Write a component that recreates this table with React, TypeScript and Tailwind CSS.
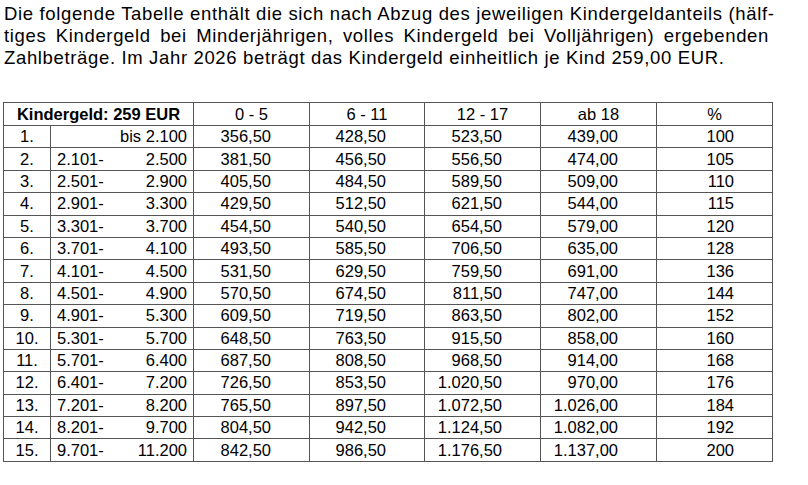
const ROWS: [string, string, string, string, string, string, string, string][] = [
    ["1.", "", "bis 2.100", "356,50", "428,50", "523,50", "439,00", "100"],
    ["2.", "2.101-", "2.500", "381,50", "456,50", "556,50", "474,00", "105"],
    ["3.", "2.501-", "2.900", "405,50", "484,50", "589,50", "509,00", "110"],
    ["4.", "2.901-", "3.300", "429,50", "512,50", "621,50", "544,00", "115"],
    ["5.", "3.301-", "3.700", "454,50", "540,50", "654,50", "579,00", "120"],
    ["6.", "3.701-", "4.100", "493,50", "585,50", "706,50", "635,00", "128"],
    ["7.", "4.101-", "4.500", "531,50", "629,50", "759,50", "691,00", "136"],
    ["8.", "4.501-", "4.900", "570,50", "674,50", "811,50", "747,00", "144"],
    ["9.", "4.901-", "5.300", "609,50", "719,50", "863,50", "802,00", "152"],
    ["10.", "5.301-", "5.700", "648,50", "763,50", "915,50", "858,00", "160"],
    ["11.", "5.701-", "6.400", "687,50", "808,50", "968,50", "914,00", "168"],
    ["12.", "6.401-", "7.200", "726,50", "853,50", "1.020,50", "970,00", "176"],
    ["13.", "7.201-", "8.200", "765,50", "897,50", "1.072,50", "1.026,00", "184"],
    ["14.", "8.201-", "9.700", "804,50", "942,50", "1.124,50", "1.082,00", "192"],
    ["15.", "9.701-", "11.200", "842,50", "986,50", "1.176,50", "1.137,00", "200"],
];

const HEADS = ["0 - 5", "6 - 11", "12 - 17", "ab 18", "%"];

const cell = "border border-[#555] p-0 align-middle";

export default function App() {
    return (
        <div className="min-h-[485px] w-[808px] bg-white text-black font-['Liberation_Sans',Arial,sans-serif]">
            {/* Intro paragraph, justified like the source document */}
            <div className="ml-[4px] w-[765px] pt-[3px] text-[18.5px] leading-[21.8px] tracking-[0.65px]">
                <div className="text-justify [text-align-last:justify] whitespace-nowrap">
                    Die folgende Tabelle enthält die sich nach Abzug des jeweiligen Kindergeldanteils (hälf-
                </div>
                <div className="text-justify [text-align-last:justify] whitespace-nowrap">
                    tiges Kindergeld bei Minderjährigen, volles Kindergeld bei Volljährigen) ergebenden
                </div>
                <div>Zahlbeträge. Im Jahr 2026 beträgt das Kindergeld einheitlich je Kind 259,00 EUR.</div>
            </div>

            <table className="mt-[34px] ml-[3px] w-[769px] table-fixed border-collapse text-[16.5px] leading-[19px]">
                <colgroup>
                    <col className="w-[47px]" />
                    <col className="w-[143px]" />
                    <col className="w-[116px]" />
                    <col className="w-[115px]" />
                    <col className="w-[116px]" />
                    <col className="w-[116px]" />
                    <col className="w-[116px]" />
                </colgroup>
                <thead>
                    <tr className="h-[22.6px]">
                        <th colSpan={2} className={`${cell} text-center font-bold`}>Kindergeld: 259 EUR</th>
                        {HEADS.map(h => (
                            <th key={h} className={`${cell} text-center font-normal`}>{h}</th>
                        ))}
                    </tr>
                </thead>
                <tbody>
                    {ROWS.map(r => (
                        <tr key={r[0]} className="h-[22.4px]">
                            <td className={`${cell} text-center`}>{r[0]}</td>
                            <td className={cell}>
                                <div className="flex justify-between pl-[6px] pr-[6px]">
                                    <span>{r[1]}</span>
                                    <span>{r[2]}</span>
                                </div>
                            </td>
                            {r.slice(3).map((v, i) => (
                                <td key={i} className={`${cell} text-right pr-[38px]`}>{v}</td>
                            ))}
                        </tr>
                    ))}
                </tbody>
            </table>
        </div>
    );
}
